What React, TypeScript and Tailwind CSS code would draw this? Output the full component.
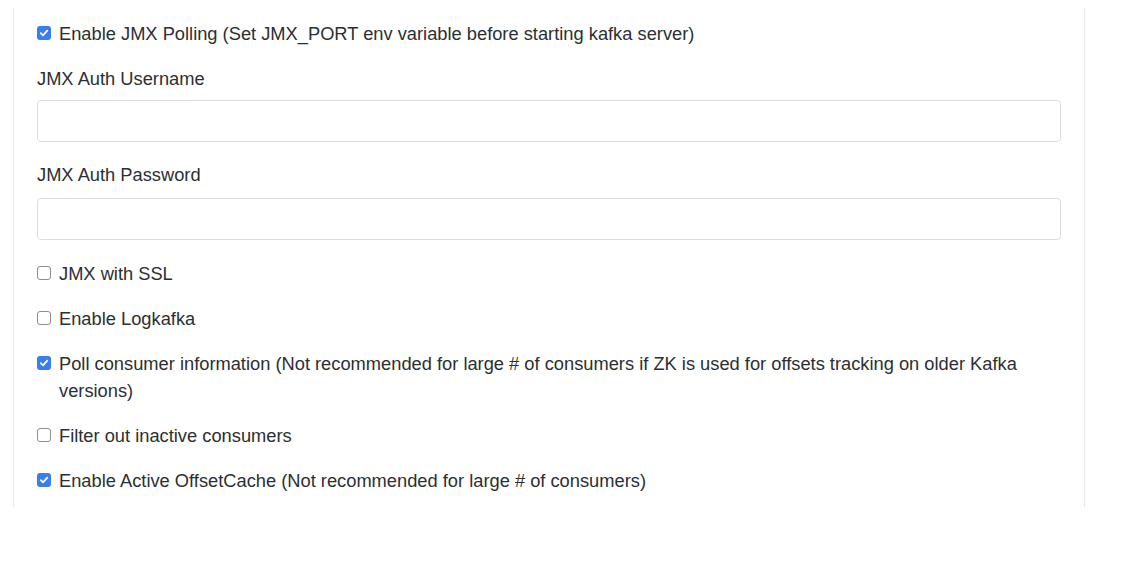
import React from "react";

function Box({ checked }: { checked: boolean }) {
  return checked ? (
    <span className="mt-[6px] flex h-[14px] w-[14px] shrink-0 items-center justify-center rounded-[3px] bg-[#3a7cf2]">
      <svg width="10" height="10" viewBox="0 0 10 10" fill="none">
        <path d="M1.8 5.2 L4 7.4 L8.3 2.6" stroke="white" strokeWidth="1.8" strokeLinecap="round" strokeLinejoin="round" />
      </svg>
    </span>
  ) : (
    <span className="mt-[6px] h-[14px] w-[14px] shrink-0 rounded-[3px] border border-[#8e8e8e] bg-white" />
  );
}

function Check({ checked, children, mb = "mb-[18px]" }: { checked: boolean; children: React.ReactNode; mb?: string }) {
  return (
    <div className={`flex items-start gap-[8px] ${mb}`}>
      <Box checked={checked} />
      <span>{children}</span>
    </div>
  );
}

export default function App() {
  return (
    <div className="min-h-[584px] bg-white pt-[8px] pl-[13px]" style={{ fontFamily: '"Liberation Sans", Arial, sans-serif' }}>
      <div className="w-[1072px] border-x border-[#e8e8e8] pl-[23px] pr-[23px] pt-[12px] pb-[13px] text-[18.3px] leading-[27px] text-[#2b2f33]">
        <Check checked>Enable JMX Polling (Set JMX_PORT env variable before starting kafka server)</Check>
        <div className="mb-[8px]">JMX Auth Username</div>
        <div className="mb-[19px] h-[42px] w-full rounded-[4px] border border-[#d9dde1] bg-white" />
        <div className="mb-[10px]">JMX Auth Password</div>
        <div className="mb-[20px] h-[42px] w-full rounded-[4px] border border-[#d9dde1] bg-white" />
        <Check checked={false}>JMX with SSL</Check>
        <Check checked={false}>Enable Logkafka</Check>
        <Check checked>
          Poll consumer information (Not recommended for large # of consumers if ZK is used for offsets tracking on older Kafka versions)
        </Check>
        <Check checked={false}>Filter out inactive consumers</Check>
        <Check checked mb="mb-0">Enable Active OffsetCache (Not recommended for large # of consumers)</Check>
      </div>
    </div>
  );
}
